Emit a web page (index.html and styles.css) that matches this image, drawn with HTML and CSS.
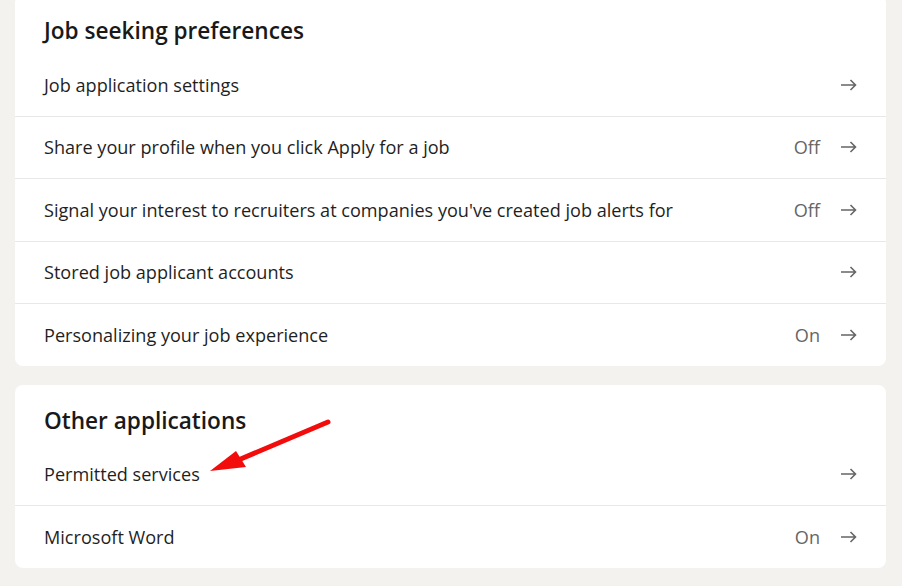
FILE: index.html
```html
<!DOCTYPE html>
<html lang="en">
<head>
<meta charset="utf-8">
<title>Job seeking preferences</title>
<link rel="stylesheet" href="styles.css">
</head>
<body>
<div class="page">
  <section class="card card-first">
    <h2 class="card-title">Job seeking preferences</h2>
    <ul class="rows">
      <li class="row"><span class="row-label">Job application settings</span><span class="row-end"><svg class="go" viewBox="0 0 17 12"><path d="M1 6H15.5M10.5 1L15.5 6L10.5 11"/></svg></span></li>
      <li class="row"><span class="row-label">Share your profile when you click Apply for a job</span><span class="row-end"><span class="state">Off</span><svg class="go" viewBox="0 0 17 12"><path d="M1 6H15.5M10.5 1L15.5 6L10.5 11"/></svg></span></li>
      <li class="row"><span class="row-label">Signal your interest to recruiters at companies you've created job alerts for</span><span class="row-end"><span class="state">Off</span><svg class="go" viewBox="0 0 17 12"><path d="M1 6H15.5M10.5 1L15.5 6L10.5 11"/></svg></span></li>
      <li class="row"><span class="row-label">Stored job applicant accounts</span><span class="row-end"><svg class="go" viewBox="0 0 17 12"><path d="M1 6H15.5M10.5 1L15.5 6L10.5 11"/></svg></span></li>
      <li class="row"><span class="row-label">Personalizing your job experience</span><span class="row-end"><span class="state">On</span><svg class="go" viewBox="0 0 17 12"><path d="M1 6H15.5M10.5 1L15.5 6L10.5 11"/></svg></span></li>
    </ul>
  </section>
  <section class="card">
    <h2 class="card-title">Other applications</h2>
    <ul class="rows">
      <li class="row"><span class="row-label">Permitted services</span><span class="row-end"><svg class="go" viewBox="0 0 17 12"><path d="M1 6H15.5M10.5 1L15.5 6L10.5 11"/></svg></span></li>
      <li class="row"><span class="row-label">Microsoft Word</span><span class="row-end"><span class="state">On</span><svg class="go" viewBox="0 0 17 12"><path d="M1 6H15.5M10.5 1L15.5 6L10.5 11"/></svg></span></li>
    </ul>
  </section>
  <svg class="annotation" viewBox="0 0 902 586" width="902" height="586">
    <line x1="328" y1="422" x2="236" y2="461" stroke="#f20c0c" stroke-width="5" stroke-linecap="round"/>
    <polygon points="210,471 236,451 246,467" fill="#f20c0c"/>
  </svg>
</div>
</body>
</html>
```

FILE: styles.css
```css
html, body {
  margin: 0;
  padding: 0;
  background: #f3f2ef;
}
body {
  font-family: "Open Sans", "Noto Sans", sans-serif;
  color: #1f1f1f;
}
.page {
  position: relative;
  width: 902px;
  height: 586px;
  overflow: hidden;
  padding: 0 16px 0 15px;
  box-sizing: border-box;
}
.card {
  background: #fff;
  border-radius: 8px;
  padding-top: 22px;
  margin-bottom: 19px;
}
.card-first {
  margin-top: -5px;
}
.card-title {
  margin: 0 0 9px;
  padding: 0 29px;
  font-size: 22.6px;
  line-height: 28px;
  font-weight: 600;
  color: #191919;
}
.rows {
  list-style: none;
  margin: 0;
  padding: 0;
}
.row {
  display: flex;
  align-items: center;
  justify-content: space-between;
  height: 62.5px;
  box-sizing: border-box;
  padding: 0 29px;
  border-top: 1px solid #e8e8e8;
  font-size: 18.1px;
}
.row:first-child {
  border-top: none;
  height: 61.5px;
}
.row-label {
  color: #1f1f1f;
}
.row-end {
  display: flex;
  align-items: center;
  gap: 20px;
}
.state {
  color: #666;
}
.go {
  width: 17px;
  height: 12px;
  fill: none;
  stroke: #666;
  stroke-width: 1.6;
}
.annotation {
  position: absolute;
  left: 0;
  top: 0;
  pointer-events: none;
}
```
